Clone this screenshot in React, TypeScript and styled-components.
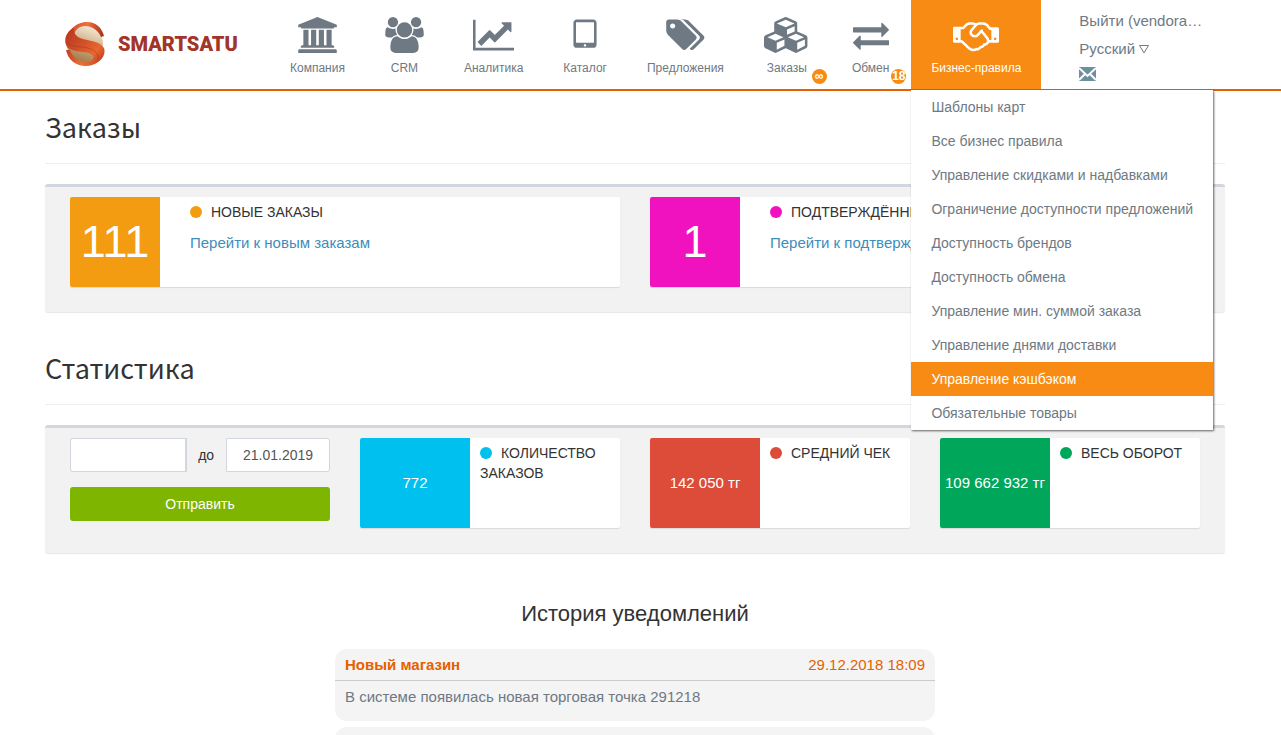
import React from 'react';
import styled, { createGlobalStyle, css } from 'styled-components';

const GlobalStyle = createGlobalStyle`
  *, *::before, *::after { box-sizing: border-box; }
  body {
    margin: 0;
    background: #fff;
    color: #333;
    font: 14px/20px "Liberation Sans", Arial, sans-serif;
    overflow-x: hidden;
  }
  h1, h2, h3, p, ul { margin: 0; padding: 0; }
  ul { list-style: none; }
  a { text-decoration: none; color: inherit; }
  button, input { font: inherit; }
`;

const orange = '#f88b13';
const brand = '#e66000';
const slate = '#6e7983';

const Header = styled.header`
  display: flex;
  height: 91px;
  padding: 0 56px 0 45px;
  border-bottom: 2px solid ${brand};
`;

const Logo = styled.a`
  display: flex;
  align-items: center;
  gap: 12px;
  width: 225px;
  padding: 0 0 2px 20px;
  color: #a2342a;
  font: 900 20px/24px Roboto, sans-serif;
`;

const Nav = styled.nav`
  display: flex;
`;

const NavItem = styled.div`
  position: relative;
`;

const NavLink = styled.a<{ $active?: boolean; $badged?: boolean }>`
  display: flex;
  flex-direction: column;
  align-items: center;
  height: 89px;
  padding: 17px ${(p) => (p.$badged ? 22 : 20)}px 0 20px;
  color: ${slate};
  font-size: 12px;
  line-height: 16px;
  white-space: nowrap;
  ${(p) => p.$active && css`
    background: ${orange};
    color: #fff;
  `}

  svg {
    display: block;
    height: 36px;
    margin-bottom: 7px;
    fill: currentColor;
  }
`;

const Badge = styled.span`
  position: absolute;
  right: 5px;
  top: 69px;
  width: 15px;
  height: 15px;
  border-radius: 50%;
  background: ${orange};
  color: #fff;
  font-size: 12px;
  font-weight: 700;
  line-height: 15px;
  display: flex;
  justify-content: center;
`;

const Dropdown = styled.ul`
  position: absolute;
  z-index: 10;
  left: 0;
  top: 90px;
  background: #fff;
  box-shadow: 1px 1px 2px rgba(0, 0, 0, 0.6);
`;

const DropdownLink = styled.a<{ $active?: boolean }>`
  display: block;
  padding: 7px 20px;
  white-space: nowrap;
  color: ${(p) => (p.$active ? '#fff' : slate)};
  background: ${(p) => (p.$active ? orange : '#fff')};
`;

const Account = styled.div`
  display: flex;
  flex-direction: column;
  align-items: flex-start;
  gap: 8px;
  padding: 11px 0 0 38px;
  color: ${slate};
  font-size: 15px;

  svg { display: block; }
`;

const Language = styled.button`
  display: flex;
  align-items: center;
  gap: 4px;
  padding: 0;
  border: 0;
  background: none;
  color: inherit;
  line-height: 20px;
  cursor: pointer;
`;

const Main = styled.main`
  padding: 0 56px 0 45px;
`;

const Section = styled.section`
  margin-bottom: 20px;
`;

const SectionTitle = styled.h2`
  height: 73px;
  margin-bottom: 20px;
  padding: 18px 0;
  border-bottom: 1px solid #eee;
  font: 400 27px/36px "Noto Sans CJK SC", "Noto Sans", sans-serif;
`;

const Panel = styled.div<{ $columns: number }>`
  display: grid;
  grid-template-columns: repeat(${(p) => p.$columns}, minmax(0, 1fr));
  gap: 30px;
  padding: 10px 25px 25px;
  border-top: 3px solid #d2d6de;
  border-radius: 3px;
  background: #f2f2f2;
  box-shadow: 0 1px 1px rgba(0, 0, 0, 0.1);
`;

const Card = styled.article`
  display: flex;
  height: 90px;
  overflow: hidden;
  border-radius: 2px;
  background: #fff;
  box-shadow: 0 1px 1px rgba(0, 0, 0, 0.1);
`;

const CardValue = styled.div<{ $color: string; $large?: boolean }>`
  flex: none;
  display: flex;
  align-items: center;
  justify-content: center;
  width: ${(p) => (p.$large ? 90 : 110)}px;
  background: ${(p) => p.$color};
  color: #fff;
  font-size: ${(p) => (p.$large ? 45 : 15)}px;
  white-space: nowrap;
`;

const CardBody = styled.div<{ $wide?: boolean }>`
  flex: 1;
  padding: 5px ${(p) => (p.$wide ? 30 : 10)}px;
`;

const CardTitle = styled.h3`
  font-size: 14px;
  font-weight: 400;
  line-height: 20px;
  text-transform: uppercase;
`;

const Dot = styled.span<{ $color: string }>`
  display: inline-block;
  width: 12px;
  height: 12px;
  margin-right: 9px;
  border-radius: 50%;
  background: ${(p) => p.$color};
  vertical-align: -1px;
`;

const CardLink = styled.a`
  display: block;
  margin-top: 11px;
  color: #3c8dbc;
  font-size: 15px;
  white-space: nowrap;
`;

const RangeForm = styled.form`
  display: flex;
  flex-direction: column;
  gap: 15px;
`;

const RangeRow = styled.div`
  display: flex;
  align-items: center;
`;

const DateInput = styled.input<{ $start?: boolean }>`
  flex: ${(p) => (p.$start ? '8 1 0' : '7 1 0')};
  min-width: 0;
  height: 34px;
  padding: 0 8px;
  border: 1px solid #d2d6de;
  border-radius: ${(p) => (p.$start ? '3px 0 0 3px' : '0 3px 3px 0')};
  ${(p) => p.$start && 'border-right-width: 2px;'}
  background: #fff;
  color: #555;
  text-align: center;
`;

const RangeLabel = styled.label`
  padding: 0 12px 0 11px;
`;

const Submit = styled.button`
  height: 34px;
  border: 0;
  border-radius: 3px;
  background: #7db500;
  color: #fff;
  cursor: pointer;
`;

const History = styled.section`
  width: 600px;
  max-width: 100%;
  margin: 46px auto 0;
`;

const HistoryTitle = styled.h2`
  margin-bottom: 20px;
  font-size: 22px;
  font-weight: 400;
  line-height: 30px;
  text-align: center;
`;

const Notice = styled.article`
  min-height: 72px;
  margin-bottom: 6px;
  border-radius: 12px;
  background: #f4f4f4;
  color: ${slate};
  font-size: 15px;
`;

const NoticeHead = styled.header`
  display: flex;
  justify-content: space-between;
  height: 32px;
  padding: 6px 10px;
  border-bottom: 1px solid #ccc;
  color: ${brand};
`;

const NoticeText = styled.p`
  padding: 6px 10px;
`;

type Icon = { w: number; d: string };

const icons: Record<string, Icon> = {
  bank: { w: 1920, d: 'M960 0l960 384v128h-128q0 26-20.5 45t-48.5 19h-1526q-28 0-48.5-19t-20.5-45h-128v-128zm-704 640h256v768h128v-768h256v768h128v-768h256v768h128v-768h256v768h59q28 0 48.5 19t20.5 45v64h-1664v-64q0-26 20.5-45t48.5-19h59v-768zm1595 960q28 0 48.5 19t20.5 45v128h-1920v-128q0-26 20.5-45t48.5-19h1782z' },
  users: { w: 1920, d: 'M593 896q-162 5-265 128h-134q-82 0-138-40.5t-56-118.5q0-353 124-353 6 0 43.5 21t97.5 42.5 119 21.5q67 0 133-23-5 37-5 66 0 139 81 256zm1071 637q0 120-73 189.5t-194 69.5h-874q-121 0-194-69.5t-73-189.5q0-53 3.5-103.5t14-109 26.5-108.5 43-97.5 62-81 85.5-53.5 111.5-20q10 0 43 21.5t73 48 107 48 135 21.5 135-21.5 107-48 73-48 43-21.5q61 0 111.5 20t85.5 53.5 62 81 43 97.5 26.5 108.5 14 109 3.5 103.5zm-1024-1277q0 106-75 181t-181 75-181-75-75-181 75-181 181-75 181 75 75 181zm704 384q0 159-112.5 271.5t-271.5 112.5-271.5-112.5-112.5-271.5 112.5-271.5 271.5-112.5 271.5 112.5 112.5 271.5zm576 225q0 78-56 118.5t-138 40.5h-134q-103-123-265-128 81-117 81-256 0-29-5-66 66 23 133 23 59 0 119-21.5t97.5-42.5 43.5-21q124 0 124 353zm-128-609q0 106-75 181t-181 75-181-75-75-181 75-181 181-75 181 75 75 181z' },
  chart: { w: 2048, d: 'M2048 1536v128h-2048v-1536h128v1408h1920zm-128-1248v435q0 21-19.5 29.5t-35.5-7.5l-121-121-633 633q-10 10-23 10t-23-10l-233-233-416 416-192-192 585-585q10-10 23-10t23 10l233 233 464-464-121-121q-16-16-7.5-35.5t29.5-19.5h435q14 0 23 9t9 23z' },
  tablet: { w: 1792, d: 'M960 1408q0-26-19-45t-45-19-45 19-19 45 19 45 45 19 45-19 19-45zm384-160v-960q0-13-9.5-22.5t-22.5-9.5h-832q-13 0-22.5 9.5t-9.5 22.5v960q0 13 9.5 22.5t22.5 9.5h832q13 0 22.5-9.5t9.5-22.5zm128-960v1088q0 66-47 113t-113 47h-832q-66 0-113-47t-47-113v-1088q0-66 47-113t113-47h832q66 0 113 47t47 113z' },
  tags: { w: 1920, d: 'M448 448q0-53-37.5-90.5t-90.5-37.5-90.5 37.5-37.5 90.5 37.5 90.5 90.5 37.5 90.5-37.5 37.5-90.5zm1067 576q0 53-37 90l-491 492q-39 37-91 37-53 0-90-37l-715-716q-38-37-64.5-101t-26.5-117v-416q0-52 38-90t90-38h416q53 0 117 26.5t102 64.5l715 714q37 39 37 91zm384 0q0 53-37 90l-491 492q-39 37-91 37-36 0-59-14t-53-45l470-470q37-37 37-90 0-52-37-91l-715-714q-38-38-102-64.5t-117-26.5h224q53 0 117 26.5t102 64.5l715 714q37 39 37 91z' },
  cubes: { w: 2304, d: 'M640 1632l384-192v-314l-384 164v342zm-64-454l404-173-404-173-404 173zm1088 454l384-192v-314l-384 164v342zm-64-454l404-173-404-173-404 173zm-448-293l384-165v-266l-384 164v267zm-64-379l441-189-441-189-441 189zm1088 518v416q0 36-19 67t-52 47l-448 224q-25 14-57 14t-57-14l-448-224q-4-2-7-4-2 2-7 4l-448 224q-25 14-57 14t-57-14l-448-224q-33-16-52-47t-19-67v-416q0-38 21.5-70t56.5-48l434-186v-400q0-38 21.5-70t56.5-48l448-192q23-10 50-10t50 10l448 192q35 16 56.5 48t21.5 70v400l434 186q36 16 57 48t21 70z' },
  exchange: { w: 1792, d: 'M1792 1184v192q0 13-9.5 22.5t-22.5 9.5h-1376v192q0 13-9.5 22.5t-22.5 9.5q-12 0-24-10l-319-320q-9-9-9-22 0-14 9-23l320-320q9-9 23-9 13 0 22.5 9.5t9.5 22.5v192h1376q13 0 22.5 9.5t9.5 22.5zm0-544q0 14-9 23l-320 320q-9 9-23 9-13 0-22.5-9.5t-9.5-22.5v-192h-1376q-13 0-22.5-9.5t-9.5-22.5v-192q0-13 9.5-22.5t22.5-9.5h1376v-192q0-14 9-23t23-9q12 0 24 10l319 319q9 9 9 23z' },
  handshake: { w: 2304, d: 'M192 1152q40 0 56-32t0-64-56-32-56 32 0 64 56 32zm1473-58q-10-13-38.5-50t-41.5-54-38-49-42.5-53-40.5-47-45-49l-125 140q-83 94-208.5 92t-205.5-98q-57-69-56.5-158t58.5-157l177-206q-22-11-51-16.5t-47.5-6-56.5.5-49 1q-92 0-158 66l-158 158h-155v544q5 0 21-.5t22 0 19.5 2 20.5 4.5 17.5 8.5 18.5 13.5l297 292q115 111 227 111 78 0 125-47 57 20 112.5-8t72.5-85q74 6 127-44 20-18 36-45.5t14-50.5q10 10 43 10 43 0 77-21t49.5-53 12-71.5-30.5-73.5zm159 58h96v-512h-93l-157-180q-66-76-169-76h-167q-89 0-146 67l-209 243q-28 33-28 75t27 75q43 51 110 52t111-49l193-218q25-23 53.5-21.5t47 27 8.5 56.5q16 19 56 63t60 68q29 36 82.5 105.5t64.5 84.5q52 66 60 140zm288 0q40 0 56-32t0-64-56-32-56 32 0 64 56 32zm192-576v640q0 26-19 45t-45 19h-434q-27 65-82 106.5t-125 51.5q-33 48-80.5 81.5t-102.5 45.5q-42 53-104.5 81.5t-128.5 24.5q-60 34-126 39.5t-127.5-14-117-53.5-103.5-81l-287-282h-358q-26 0-45-19t-19-45v-672q0-26 19-45t45-19h421q14-14 47-48t47.5-48 44-40 50.5-37.5 51-25.5 62-19.5 68-5.5h117q99 0 181 56 82-56 181-56h167q35 0 67 6t56.5 14.5 51.5 26.5 44.5 31 43 39.5 39 42 41 48 41.5 48.5h355q26 0 45 19t19 45z' },
};

const NavIcon = ({ name }: { name: string }) => (
  <svg viewBox={`0 0 ${icons[name].w} 1792`} width={Math.round((icons[name].w * 36) / 1792)} aria-hidden="true">
    <path d={icons[name].d} />
  </svg>
);

const LogoMark = () => (
  <svg width="41" height="44" viewBox="0 0 41 44" aria-hidden="true">
    <defs>
      <linearGradient id="globe" x1="0.7" y1="0.1" x2="0.4" y2="1">
        <stop offset="0" stopColor="#f0e2cb" />
        <stop offset="0.45" stopColor="#cdb089" />
        <stop offset="1" stopColor="#a37848" />
      </linearGradient>
      <linearGradient id="band" x1="0" y1="0" x2="1" y2="0.8">
        <stop offset="0" stopColor="#b5331d" />
        <stop offset="0.4" stopColor="#cd4a26" />
        <stop offset="0.8" stopColor="#e8662f" />
        <stop offset="1" stopColor="#c54322" />
      </linearGradient>
      <linearGradient id="topArc" x1="0" y1="0" x2="1" y2="0">
        <stop offset="0" stopColor="#d9502a" />
        <stop offset="0.5" stopColor="#f0703a" />
        <stop offset="1" stopColor="#a82c1c" />
      </linearGradient>
      <linearGradient id="lowArc" x1="0" y1="0" x2="1" y2="0">
        <stop offset="0" stopColor="#c23f20" />
        <stop offset="0.4" stopColor="#ee7034" />
        <stop offset="1" stopColor="#c9451f" />
      </linearGradient>
    </defs>
    <ellipse cx="20" cy="22" rx="18" ry="19" fill="url(#globe)" />
    <path d="M7 7C11 2 16 0 22 0C31 0 37 6 39 14L36 15C33 8 27 4 20 4C14 4 10 8 9 13Z" fill="url(#topArc)" />
    <path d="M1 28L5 28C8 36 14 40 21 40C26 40 28 38 29 34L39 29C37 38 30 44 21 44C11 44 3 38 1 28Z" fill="url(#lowArc)" />
    <path d="M9 5C8 11 11 15 18 17C27 19 35 20 39 26C41 32 37 39 29 42C31 37 29 33 24 31C16 29 7 30 2 25C-2 18 1 10 9 5Z" fill="url(#band)" />
    <path d="M1 19C6 26 15 24 23 26C30 28 34 32 33 38" fill="none" stroke="#8f2a18" strokeWidth="0.8" opacity="0.45" />
  </svg>
);

const Envelope = () => (
  <svg width="17" height="14" viewBox="0 0 17 14" aria-hidden="true">
    <rect width="17" height="14" fill="#6c919e" />
    <path d="M0 1L8.5 9L17 1M0 13L6 7M17 13L11 7" fill="none" stroke="#fff" strokeWidth="2" />
  </svg>
);

const navItems = [
  { label: 'Компания', icon: 'bank' },
  { label: 'CRM', icon: 'users' },
  { label: 'Аналитика', icon: 'chart' },
  { label: 'Каталог', icon: 'tablet' },
  { label: 'Предложения', icon: 'tags' },
  { label: 'Заказы', icon: 'cubes', badge: '∞' },
  { label: 'Обмен', icon: 'exchange', badge: '18' },
];

const rules = [
  'Шаблоны карт',
  'Все бизнес правила',
  'Управление скидками и надбавками',
  'Ограничение доступности предложений',
  'Доступность брендов',
  'Доступность обмена',
  'Управление мин. суммой заказа',
  'Управление днями доставки',
  'Управление кэшбэком',
  'Обязательные товары',
];

const orders = [
  { value: '111', color: '#f39c12', title: 'Новые заказы', link: 'Перейти к новым заказам' },
  { value: '1', color: '#f012be', title: 'Подтверждённые заказы', link: 'Перейти к подтверждённым заказам' },
];

const stats = [
  { value: '772', color: '#00c0ef', title: 'Количество заказов' },
  { value: '142 050 тг', color: '#dd4b39', title: 'Средний чек' },
  { value: '109 662 932 тг', color: '#00a65a', title: 'Весь оборот' },
];

export default function App() {
  return (
    <>
      <GlobalStyle />
      <Header>
        <Logo href="#">
          <LogoMark />
          SMARTSATU
        </Logo>
        <Nav>
          {navItems.map((item) => (
            <NavItem key={item.label}>
              <NavLink href="#" $badged={Boolean(item.badge)}>
                <NavIcon name={item.icon} />
                {item.label}
              </NavLink>
              {item.badge && <Badge>{item.badge}</Badge>}
            </NavItem>
          ))}
          <NavItem>
            <NavLink href="#" $active>
              <NavIcon name="handshake" />
              Бизнес-правила
            </NavLink>
            <Dropdown>
              {rules.map((rule) => (
                <li key={rule}>
                  <DropdownLink href="#" $active={rule === 'Управление кэшбэком'}>{rule}</DropdownLink>
                </li>
              ))}
            </Dropdown>
          </NavItem>
        </Nav>
        <Account>
          <a href="#">Выйти (vendora…</a>
          <Language type="button">
            Русский
            <svg width="10" height="9" viewBox="0 0 10 9" aria-hidden="true">
              <path d="M0.5 0.5H9.5L5 8Z" fill="none" stroke="currentColor" />
            </svg>
          </Language>
          <a href="#" aria-label="Сообщения"><Envelope /></a>
        </Account>
      </Header>
      <Main>
        <Section>
          <SectionTitle>Заказы</SectionTitle>
          <Panel $columns={2}>
            {orders.map((o) => (
              <Card key={o.title}>
                <CardValue $color={o.color} $large>{o.value}</CardValue>
                <CardBody $wide>
                  <CardTitle><Dot $color={o.color} />{o.title}</CardTitle>
                  <CardLink href="#">{o.link}</CardLink>
                </CardBody>
              </Card>
            ))}
          </Panel>
        </Section>
        <Section>
          <SectionTitle>Статистика</SectionTitle>
          <Panel $columns={4}>
            <RangeForm>
              <RangeRow>
                <DateInput $start type="text" aria-label="Дата от" />
                <RangeLabel htmlFor="date-to">до</RangeLabel>
                <DateInput id="date-to" type="text" defaultValue="21.01.2019" />
              </RangeRow>
              <Submit type="button">Отправить</Submit>
            </RangeForm>
            {stats.map((s) => (
              <Card key={s.title}>
                <CardValue $color={s.color}>{s.value}</CardValue>
                <CardBody>
                  <CardTitle><Dot $color={s.color} />{s.title}</CardTitle>
                </CardBody>
              </Card>
            ))}
          </Panel>
        </Section>
        <History>
          <HistoryTitle>История уведомлений</HistoryTitle>
          <Notice>
            <NoticeHead>
              <strong>Новый магазин</strong>
              <time>29.12.2018 18:09</time>
            </NoticeHead>
            <NoticeText>В системе появилась новая торговая точка 291218</NoticeText>
          </Notice>
          <Notice />
        </History>
      </Main>
    </>
  );
}
